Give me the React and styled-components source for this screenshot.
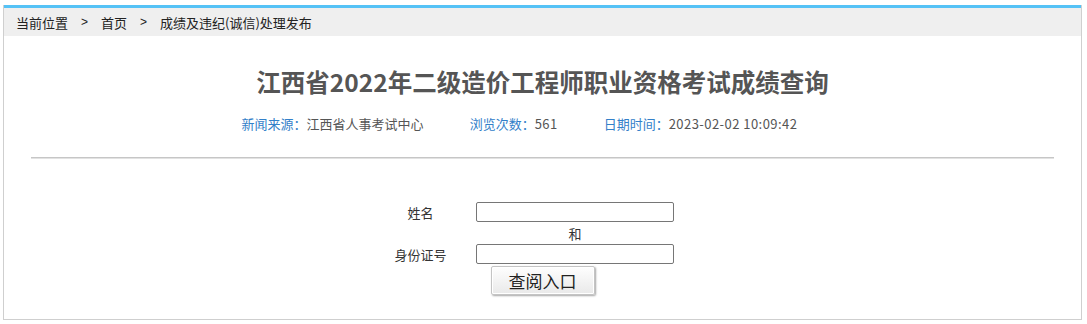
import React from "react";
import styled, { createGlobalStyle } from "styled-components";

const GlobalStyle = createGlobalStyle`
  html, body { margin: 0; padding: 0; background: #fff; }
  body {
    font-family: "Noto Sans CJK SC", "Noto Sans", sans-serif;
    color: #333;
  }
`;

const Page = styled.div`
  padding: 5px 0 0 3px;
`;

const Box = styled.div`
  box-sizing: border-box;
  width: 1079px;
  border: 1px solid #cfcfcf;
  border-top: 0;
  padding-bottom: 24px;
`;

const TopBar = styled.div`
  height: 3px;
  background: #55c2f6;
`;

const Crumbs = styled.div`
  height: 28px;
  display: flex;
  align-items: center;
  padding-left: 12px;
  background: #efefef;
  font-size: 13px;
  color: #222;
`;

const Sep = styled.span`
  margin: 0 13px 0 13px;
  font-family: "Liberation Sans", sans-serif;
  font-size: 12px;
`;

const Title = styled.h1`
  margin: 28px 0 0;
  text-align: center;
  font-size: 24.5px;
  line-height: 36px;
  font-weight: bold;
  color: #555;
`;

const Meta = styled.div`
  display: flex;
  justify-content: center;
  margin-top: 14px;
  font-size: 13px;
  line-height: 20px;
`;

const MetaItem = styled.span`
  margin-right: 46px;
  color: #555;
`;

const MetaLabel = styled.span`
  color: #3380c9;
`;

const MetaValue = styled.span`
  letter-spacing: ${(p) => (p.$wide ? "0.45px" : "0")};
`;

const Divider = styled.div`
  width: 95%;
  margin: 23px auto 0;
  border-top: 1px solid #c6c6c6;
  border-bottom: 1px solid #e2e2e2;
`;

const Form = styled.div`
  display: grid;
  grid-template-columns: 107px 202px 42px;
  justify-content: center;
  row-gap: 2px;
  margin-top: 42px;
  font-size: 13px;
  color: #333;
`;

const Label = styled.div`
  display: flex;
  align-items: center;
  justify-content: center;
  height: ${(p) => p.$h || 22}px;
`;

const Cell = styled.div`
  display: flex;
  align-items: center;
  justify-content: center;
  height: ${(p) => p.$h || 22}px;
`;

const Input = styled.input`
  box-sizing: border-box;
  width: 198px;
  height: 20px;
  margin: 0;
  padding: 1px 2px;
  border: 1px solid #767676;
  border-radius: 2px;
  background: #fff;
  outline: none;
`;

const ButtonRow = styled.div`
  grid-column: 1 / -1;
  display: flex;
  justify-content: center;
  margin-top: -1px;
`;

const Button = styled.button`
  box-sizing: border-box;
  width: 104px;
  height: 29px;
  padding: 0;
  border: 1px solid #c4c4c4;
  border-radius: 2px;
  background: linear-gradient(#fefefe, #e9e9e9);
  box-shadow: 1px 1px 2px rgba(0, 0, 0, 0.35), inset 0 0 0 1px #fff;
  font-family: "Noto Sans CJK SC", sans-serif;
  font-size: 17px;
  line-height: 27px;
  color: #222;
  cursor: pointer;
`;

export default function App() {
  return (
    <>
      <GlobalStyle />
      <Page>
        <Box>
          <TopBar />
          <Crumbs>
            <span>当前位置</span>
            <Sep>&gt;</Sep>
            <span>首页</span>
            <Sep>&gt;</Sep>
            <span>成绩及违纪(诚信)处理发布</span>
          </Crumbs>
          <Title>江西省2022年二级造价工程师职业资格考试成绩查询</Title>
          <Meta>
            <MetaItem>
              <MetaLabel>新闻来源：</MetaLabel>
              <MetaValue>江西省人事考试中心</MetaValue>
            </MetaItem>
            <MetaItem>
              <MetaLabel>浏览次数：</MetaLabel>
              <MetaValue $wide>561</MetaValue>
            </MetaItem>
            <MetaItem>
              <MetaLabel>日期时间：</MetaLabel>
              <MetaValue $wide>2023-02-02 10:09:42</MetaValue>
            </MetaItem>
          </Meta>
          <Divider />
          <Form>
            <Label>姓名</Label>
            <Cell>
              <Input type="text" />
            </Cell>
            <span />
            <span />
            <Cell $h={16}>和</Cell>
            <span />
            <Label>身份证号</Label>
            <Cell>
              <Input type="text" />
            </Cell>
            <span />
            <ButtonRow>
              <Button type="button">查阅入口</Button>
            </ButtonRow>
          </Form>
        </Box>
      </Page>
    </>
  );
}
